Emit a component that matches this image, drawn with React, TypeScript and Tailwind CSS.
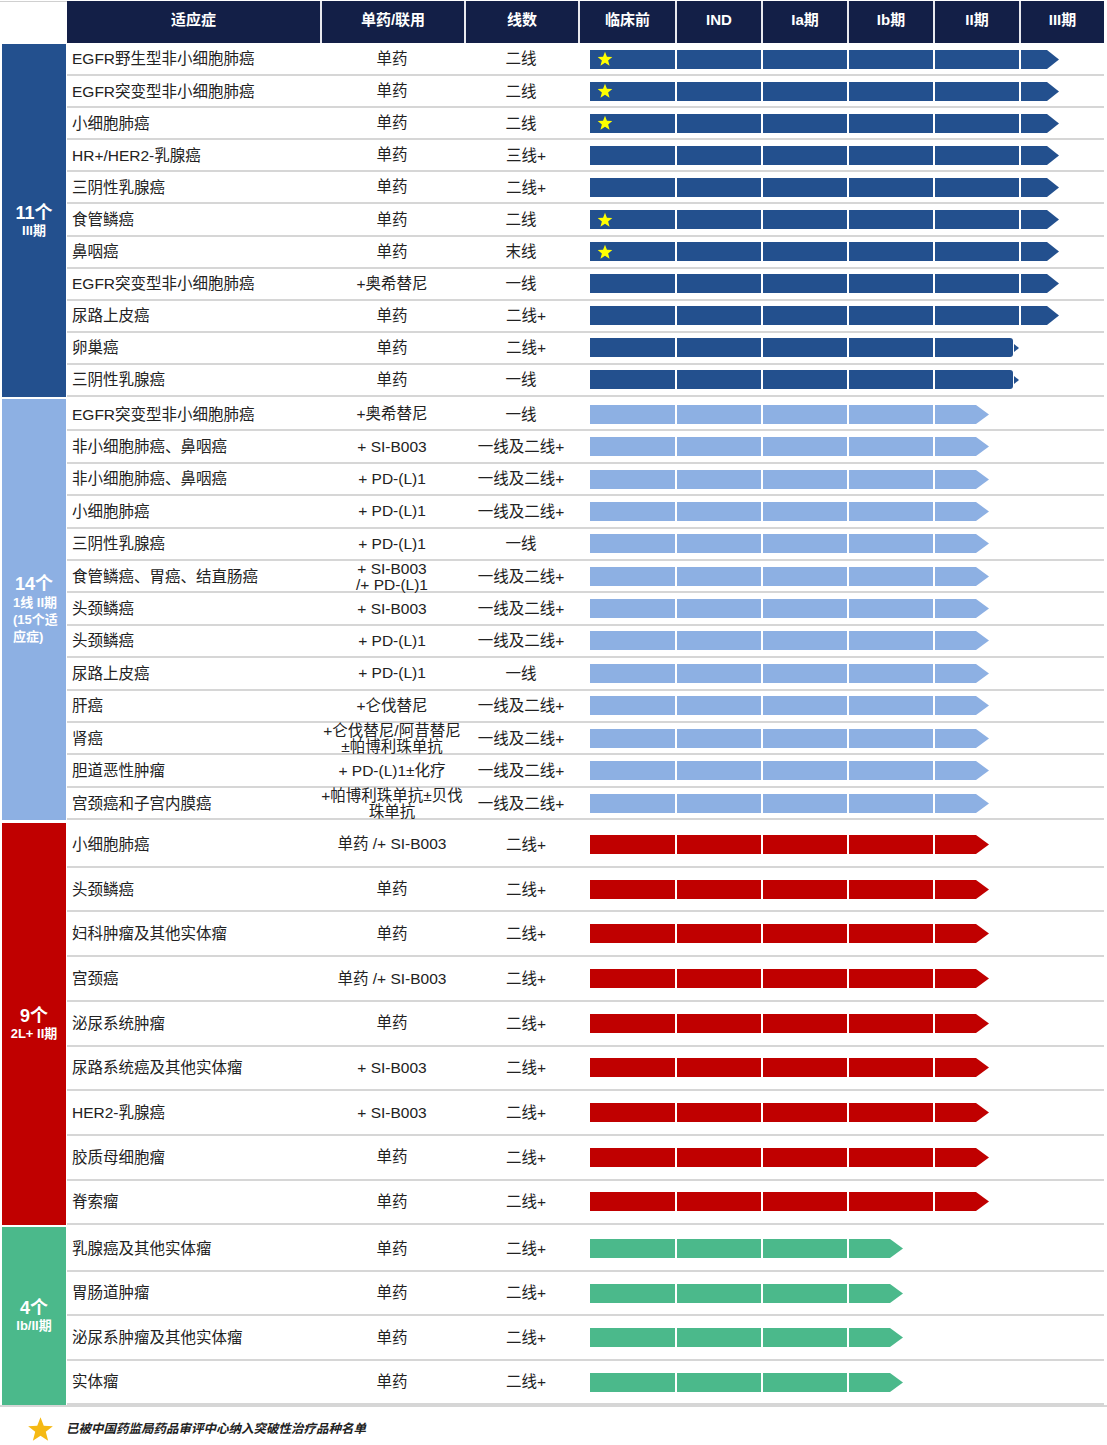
import React from "react";

type Kind = "full" | "short" | "mid" | "green";
type Row = { name: string; drug: string[]; line: string; star?: boolean; kind: Kind };
type Group = {
  labelBg: string;
  barBg: string;
  fill: string;
  rowH: string;
  gapTop: string;
  label: React.ReactNode;
  rows: Row[];
};

const FONT = { fontFamily: '"Liberation Sans", "Noto Sans CJK SC", sans-serif' };

const g1Rows: Row[] = [
  { name: "EGFR野生型非小细胞肺癌", drug: ["单药"], line: "二线", star: true, kind: "full" },
  { name: "EGFR突变型非小细胞肺癌", drug: ["单药"], line: "二线", star: true, kind: "full" },
  { name: "小细胞肺癌", drug: ["单药"], line: "二线", star: true, kind: "full" },
  { name: "HR+/HER2-乳腺癌", drug: ["单药"], line: "三线+", kind: "full" },
  { name: "三阴性乳腺癌", drug: ["单药"], line: "二线+", kind: "full" },
  { name: "食管鳞癌", drug: ["单药"], line: "二线", star: true, kind: "full" },
  { name: "鼻咽癌", drug: ["单药"], line: "末线", star: true, kind: "full" },
  { name: "EGFR突变型非小细胞肺癌", drug: ["+奥希替尼"], line: "一线", kind: "full" },
  { name: "尿路上皮癌", drug: ["单药"], line: "二线+", kind: "full" },
  { name: "卵巢癌", drug: ["单药"], line: "二线+", kind: "short" },
  { name: "三阴性乳腺癌", drug: ["单药"], line: "一线", kind: "short" },
];

const g2Rows: Row[] = [
  { name: "EGFR突变型非小细胞肺癌", drug: ["+奥希替尼"], line: "一线", kind: "mid" },
  { name: "非小细胞肺癌、鼻咽癌", drug: ["+ SI-B003"], line: "一线及二线+", kind: "mid" },
  { name: "非小细胞肺癌、鼻咽癌", drug: ["+ PD-(L)1"], line: "一线及二线+", kind: "mid" },
  { name: "小细胞肺癌", drug: ["+ PD-(L)1"], line: "一线及二线+", kind: "mid" },
  { name: "三阴性乳腺癌", drug: ["+ PD-(L)1"], line: "一线", kind: "mid" },
  { name: "食管鳞癌、胃癌、结直肠癌", drug: ["+ SI-B003", "/+ PD-(L)1"], line: "一线及二线+", kind: "mid" },
  { name: "头颈鳞癌", drug: ["+ SI-B003"], line: "一线及二线+", kind: "mid" },
  { name: "头颈鳞癌", drug: ["+ PD-(L)1"], line: "一线及二线+", kind: "mid" },
  { name: "尿路上皮癌", drug: ["+ PD-(L)1"], line: "一线", kind: "mid" },
  { name: "肝癌", drug: ["+仑伐替尼"], line: "一线及二线+", kind: "mid" },
  { name: "肾癌", drug: ["+仑伐替尼/阿昔替尼", "±帕博利珠单抗"], line: "一线及二线+", kind: "mid" },
  { name: "胆道恶性肿瘤", drug: ["+ PD-(L)1±化疗"], line: "一线及二线+", kind: "mid" },
  { name: "宫颈癌和子宫内膜癌", drug: ["+帕博利珠单抗±贝伐", "珠单抗"], line: "一线及二线+", kind: "mid" },
];

const g3Rows: Row[] = [
  { name: "小细胞肺癌", drug: ["单药 /+ SI-B003"], line: "二线+", kind: "mid" },
  { name: "头颈鳞癌", drug: ["单药"], line: "二线+", kind: "mid" },
  { name: "妇科肿瘤及其他实体瘤", drug: ["单药"], line: "二线+", kind: "mid" },
  { name: "宫颈癌", drug: ["单药 /+ SI-B003"], line: "二线+", kind: "mid" },
  { name: "泌尿系统肿瘤", drug: ["单药"], line: "二线+", kind: "mid" },
  { name: "尿路系统癌及其他实体瘤", drug: ["+ SI-B003"], line: "二线+", kind: "mid" },
  { name: "HER2-乳腺癌", drug: ["+ SI-B003"], line: "二线+", kind: "mid" },
  { name: "胶质母细胞瘤", drug: ["单药"], line: "二线+", kind: "mid" },
  { name: "脊索瘤", drug: ["单药"], line: "二线+", kind: "mid" },
];

const g4Rows: Row[] = [
  { name: "乳腺癌及其他实体瘤", drug: ["单药"], line: "二线+", kind: "green" },
  { name: "胃肠道肿瘤", drug: ["单药"], line: "二线+", kind: "green" },
  { name: "泌尿系肿瘤及其他实体瘤", drug: ["单药"], line: "二线+", kind: "green" },
  { name: "实体瘤", drug: ["单药"], line: "二线+", kind: "green" },
];

const groups: Group[] = [
  {
    labelBg: "bg-[#23508e]",
    barBg: "bg-[#23508e]",
    fill: "#23508e",
    rowH: "h-[32.1px]",
    gapTop: "mt-[1px]",
    rows: g1Rows,
    label: (
      <div className="flex flex-col items-center">
        <div className="text-[18px] font-bold leading-[20px]">11个</div>
        <div className="text-[13px] font-bold leading-[16px]">III期</div>
      </div>
    ),
  },
  {
    labelBg: "bg-[#8db0e3]",
    barBg: "bg-[#8db0e3]",
    fill: "#8db0e3",
    rowH: "h-[32.4px]",
    gapTop: "mt-[2px]",
    rows: g2Rows,
    label: (
      <div className="flex w-full flex-col">
        <div className="text-center text-[18px] font-bold leading-[20px]">14个</div>
        <div className="pl-[11px] text-[13px] font-bold leading-[17px]">
          1线 II期
          <br />
          (15个适
          <br />
          应症)
        </div>
      </div>
    ),
  },
  {
    labelBg: "bg-[#c00000]",
    barBg: "bg-[#c00000]",
    fill: "#c00000",
    rowH: "h-[44.7px]",
    gapTop: "mt-[3px]",
    rows: g3Rows,
    label: (
      <div className="flex flex-col items-center">
        <div className="text-[18px] font-bold leading-[20px]">9个</div>
        <div className="text-[13px] font-bold leading-[16px]">2L+ II期</div>
      </div>
    ),
  },
  {
    labelBg: "bg-[#4bb98b]",
    barBg: "bg-[#4bb98b]",
    fill: "#4bb98b",
    rowH: "h-[44.5px]",
    gapTop: "mt-[2px]",
    rows: g4Rows,
    label: (
      <div className="flex flex-col items-center">
        <div className="text-[18px] font-bold leading-[20px]">4个</div>
        <div className="text-[13px] font-bold leading-[16px]">Ib/II期</div>
      </div>
    ),
  },
];

const GRID = "grid grid-cols-[253px_144px_114px_97px_86px_86px_86px_86px_85px]";

function Star({ size, color }: { size: number; color: string }) {
  return (
    <svg width={size} height={size} viewBox="0 0 24 24" className="block shrink-0">
      <polygon
        points="12,1 14.9,8.6 23,9 16.7,14.1 18.8,22 12,17.5 5.2,22 7.3,14.1 1,9 9.1,8.6"
        fill={color}
      />
    </svg>
  );
}

function Tip({ fill, w = 13, h = 19 }: { fill: string; w?: number; h?: number }) {
  return (
    <svg width={w} height={h} viewBox={`0 0 ${w} ${h}`} className="block shrink-0">
      <polygon points={`0,0 ${w},${h / 2} 0,${h}`} fill={fill} />
    </svg>
  );
}

function BarCells({ kind, bg, fill, star }: { kind: Kind; bg: string; fill: string; star?: boolean }) {
  const fullCount = kind === "full" ? 5 : kind === "short" ? 4 : kind === "mid" ? 4 : 3;
  const cells: React.ReactNode[] = [];
  for (let i = 0; i < 6; i++) {
    if (i === 0) {
      cells.push(
        <div key={i} className="flex items-center pl-[12px]">
          <div className={`flex h-[19px] flex-1 items-center pl-[7px] ${bg}`}>
            {star ? <Star size={16} color="#ffff00" /> : null}
          </div>
        </div>
      );
    } else if (i < fullCount) {
      cells.push(
        <div key={i} className="flex items-center pl-[2px]">
          <div className={`h-[19px] flex-1 ${bg}`} />
        </div>
      );
    } else if (i === fullCount) {
      if (kind === "full") {
        cells.push(
          <div key={i} className="flex items-center pl-[2px]">
            <div className={`h-[19px] w-[26px] ${bg}`} />
            <Tip fill={fill} w={12} />
          </div>
        );
      } else if (kind === "short") {
        cells.push(
          <div key={i} className="flex items-center pl-[2px]">
            <div className={`h-[19px] w-[83px] rounded-r-[3px] ${bg}`} />
            <div className="pl-[1px]">
              <Tip fill={fill} w={5} h={8} />
            </div>
          </div>
        );
      } else {
        cells.push(
          <div key={i} className="flex items-center pl-[2px]">
            <div className={`h-[19px] w-[41px] ${bg}`} />
            <Tip fill={fill} w={13} />
          </div>
        );
      }
    } else {
      cells.push(<div key={i} />);
    }
  }
  return <>{cells}</>;
}

function DataRow({ row, g }: { row: Row; g: Group }) {
  const shortPlus = row.line === "二线+" || row.line === "三线+";
  return (
    <div className={`${GRID} ${g.rowH} border-b-2 border-[#d6d6d6] text-[15.5px] text-[#222]`}>
      <div className="flex items-center whitespace-nowrap pl-[5px]">{row.name}</div>
      <div className="flex flex-col items-center justify-center text-center leading-[16px] whitespace-nowrap">
        {row.drug.map((d, i) => (
          <div key={i}>{d}</div>
        ))}
      </div>
      <div className={`flex items-center justify-center whitespace-nowrap ${shortPlus ? "pl-[10px]" : ""}`}>
        {row.line}
      </div>
      <BarCells kind={row.kind} bg={g.barBg} fill={g.fill} star={row.star} />
    </div>
  );
}

export default function App() {
  const headers = ["适应症", "单药/联用", "线数", "临床前", "IND", "Ia期", "Ib期", "II期", "III期"];
  return (
    <div className="w-[1107px] bg-white" style={FONT}>
      <div className="flex pt-[1px]">
        <div className="w-[67px] border-t border-[#d0d0d0]" />
        <div className={`${GRID} h-[42px]`}>
          {headers.map((h, i) => (
            <div
              key={h}
              className={`flex items-center justify-center bg-[#131f47] pb-[3px] text-[15px] font-bold text-white ${
                i > 0 ? "border-l-2 border-[#e8e8ee]" : ""
              }`}
            >
              {h}
            </div>
          ))}
        </div>
      </div>
      <div className="flex flex-col">
        {groups.map((g, gi) => (
          <div key={gi} className={`flex ${g.gapTop}`}>
            <div className={`ml-[2px] mr-[1px] flex w-[64px] items-center justify-center text-white ${g.labelBg}`}>
              {g.label}
            </div>
            <div className="flex flex-col">
              {g.rows.map((r, ri) => (
                <DataRow key={ri} row={r} g={g} />
              ))}
            </div>
          </div>
        ))}
      </div>
      <div className="border-t-2 border-[#d6d6d6]" />
      <div className="flex h-[44px] items-center pl-[27px]">
        <Star size={27} color="#f5b914" />
        <span className="pl-[12px] text-[12.5px] font-bold italic text-[#222]">
          已被中国药监局药品审评中心纳入突破性治疗品种名单
        </span>
      </div>
    </div>
  );
}
